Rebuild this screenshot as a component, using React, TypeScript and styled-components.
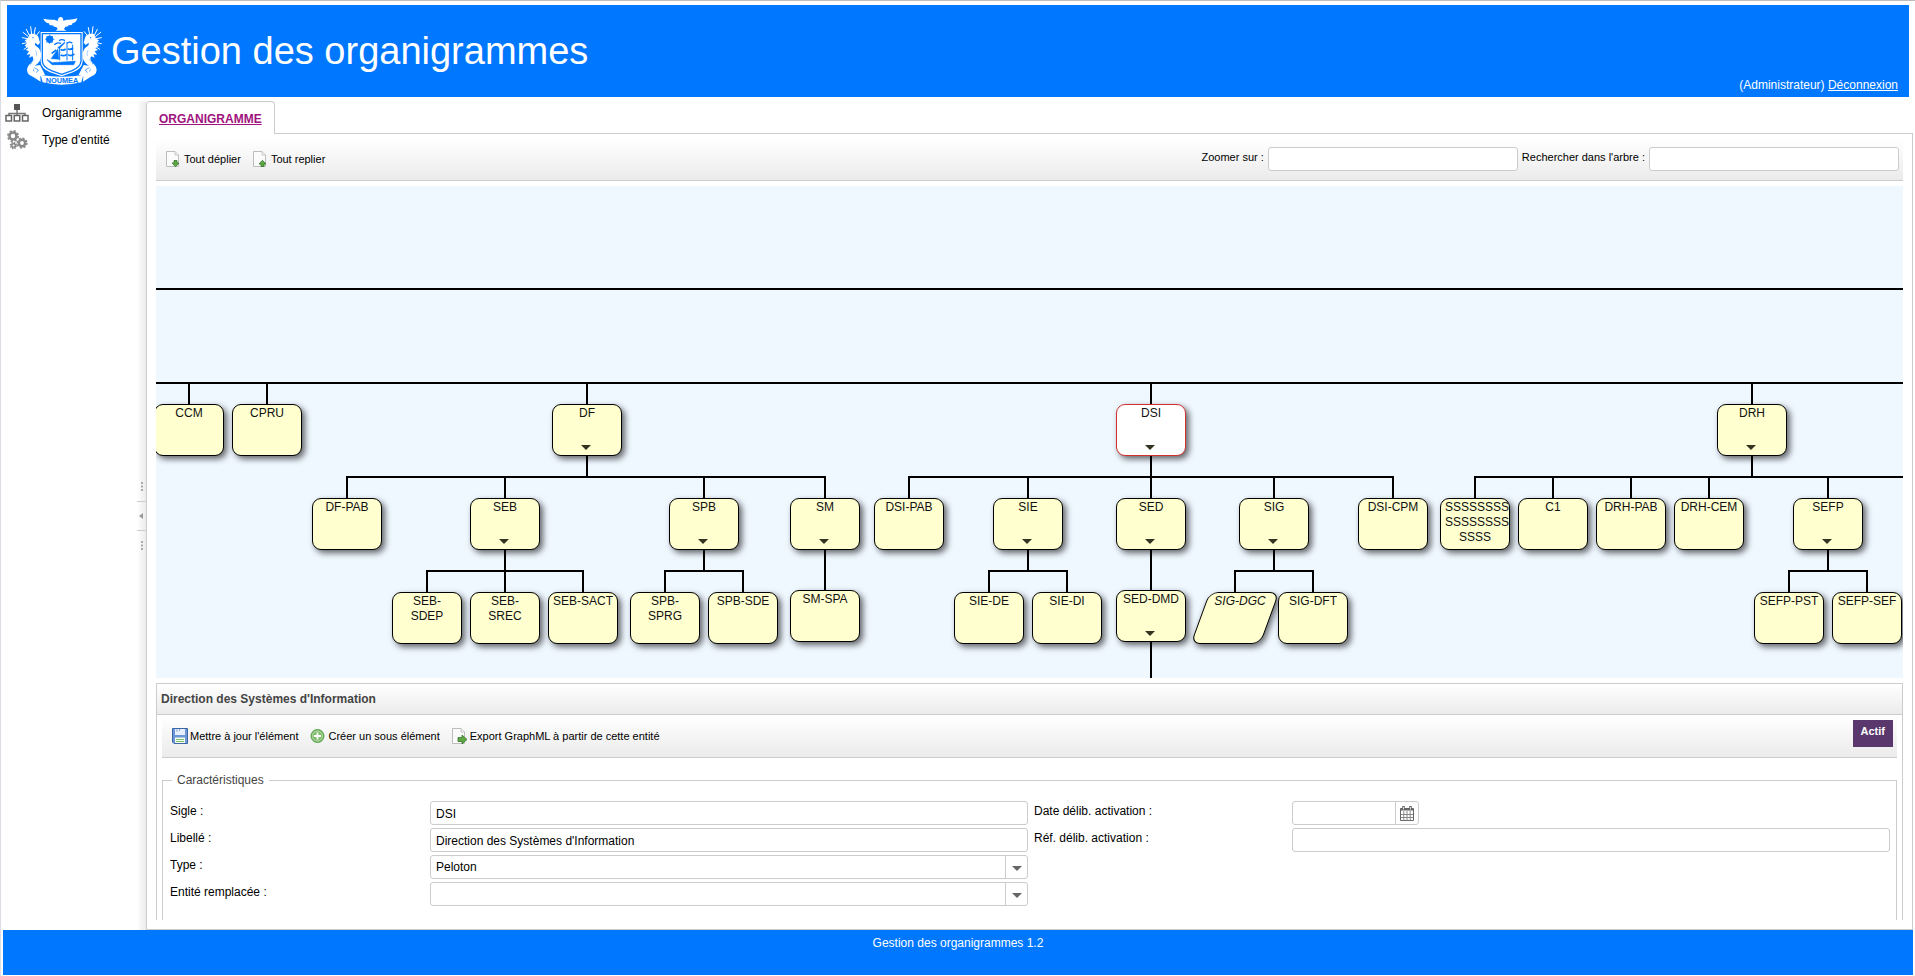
import React from 'react';
import styled, { createGlobalStyle, css } from 'styled-components';

const BLUE = '#0077ff';
const LINE = '#cccccc';

const GlobalStyle = createGlobalStyle`
  *, *::before, *::after { box-sizing: border-box; }
  body {
    margin: 0;
    background: #fff;
    color: #000;
    font: 12px/14px "Liberation Sans", Arial, sans-serif;
  }
  button, input, select { font: inherit; color: inherit; }
`;

const Page = styled.div`
  display: flex;
  flex-direction: column;
  height: 100vh;
  min-height: 760px;
  border-top: 1px solid #bdbdbd;
  border-left: 1px solid #dcdce4;
`;

/* Header */

const Header = styled.header`
  display: flex;
  flex: none;
  align-items: center;
  gap: 1px;
  height: 92px;
  margin: 4px 6px 4px;
  padding: 0 11px 0 8px;
  background: ${BLUE};
  color: #fff;
`;

const CrestImage = styled.svg`
  flex: none;
  margin-bottom: 2px;
`;

const Title = styled.h1`
  margin: 0;
  font-size: 38px;
  line-height: 44px;
  font-weight: 400;
`;

const Session = styled.div`
  align-self: flex-end;
  margin-left: auto;
  padding-bottom: 5px;

  a { color: inherit; }
`;

const Body = styled.div`
  display: flex;
  flex: 1;
  min-height: 0;
`;

/* Sidebar */

const Sidebar = styled.aside`
  display: flex;
  flex: none;
  width: 145px;
`;

const Nav = styled.nav`
  flex: 1;
`;

const NavLink = styled.a`
  display: flex;
  align-items: center;
  gap: 13px;
  height: 27px;
  padding: 0 0 3px 4px;
  color: #000;
  text-decoration: none;

  svg { flex: none; }
`;

const Splitter = styled.div`
  display: flex;
  flex: none;
  flex-direction: column;
  align-items: center;
  justify-content: center;
  gap: 10px;
  width: 9px;
  background: linear-gradient(to right, #fff, #ebebeb);
`;

const Collapse = styled.button`
  display: flex;
  align-items: center;
  justify-content: center;
  width: 9px;
  height: 30px;
  padding: 0;
  border: solid ${LINE};
  border-width: 1px 0;
  background: none;
`;

/* Main area */

const Main = styled.main`
  display: flex;
  flex: 1;
  flex-direction: column;
  min-width: 0;
  margin-right: 2px;
`;

const TabBar = styled.div`
  display: flex;
  flex: none;
  height: 33px;
`;

const Tab = styled.a`
  padding: 10px 12px 0;
  border: 1px solid ${LINE};
  border-bottom: 0;
  border-radius: 4px 4px 0 0;
  color: #a0127d;
  font-weight: 700;
`;

const TabFiller = styled.div`
  flex: 1;
  border-bottom: 1px solid ${LINE};
`;

const Panel = styled.section`
  display: flex;
  flex: 1;
  flex-direction: column;
  gap: 5px;
  min-height: 0;
  padding: 5px 9px 9px;
  border: 1px solid ${LINE};
  border-top: 0;
`;

const Toolbar = styled.div`
  display: flex;
  flex: none;
  align-items: flex-start;
  height: 42px;
  padding: 4px;
  border-bottom: 1px solid ${LINE};
  background: linear-gradient(#fff, #ebebeb);
  font-size: 11px;
`;

const ToolButton = styled.button`
  display: flex;
  align-items: center;
  gap: 2px;
  height: 26px;
  margin-top: 4px;
  padding: 0 6px 2px;
  border: 0;
  background: none;
  white-space: nowrap;
`;

const ToolFields = styled.div`
  display: flex;
  gap: 4px;
  margin: 4px 0 0 auto;
`;

const FieldLabel = styled.label`
  line-height: 20px;
  white-space: nowrap;
`;

const fieldBox = css`
  width: 100%;
  height: 24px;
  border: 1px solid ${LINE};
  border-radius: 3px;
  background: #fff;
`;

const TextInput = styled.input`
  ${fieldBox}
  padding: 1px 5px 0;
`;

const SearchInput = styled(TextInput)`
  width: 250px;
`;

/* Chart */

const Canvas = styled.div`
  position: relative;
  flex: 1;
  min-height: 0;
  overflow: hidden;
  background: #eff7ff;
`;

const Connectors = styled.svg`
  position: absolute;
  inset: 0;
  width: 100%;
  height: 100%;
`;

const Node = styled.button<{ $x: number; $y: number; $selected?: boolean; $slanted?: boolean }>`
  position: absolute;
  left: ${p => p.$x - 35}px;
  top: ${p => p.$y}px;
  isolation: isolate;
  display: flex;
  flex-direction: column;
  align-items: center;
  justify-content: space-between;
  width: 70px;
  height: 52px;
  padding: ${p => (p.$slanted ? '2px 4px 6px 14px' : '2px 5px 6px')};
  border: 0;
  background: none;
  color: #111;
  font-style: ${p => (p.$slanted ? 'italic' : 'normal')};
  line-height: 15px;
  white-space: pre;

  &::before {
    content: '';
    position: absolute;
    inset: 0;
    z-index: -1;
    border: 1px solid ${p => (p.$selected ? '#d0312f' : '#000')};
    border-radius: 9px;
    background: ${p => (p.$selected ? '#fff' : '#ffffd0')};
    box-shadow: 3px 3px 6px rgba(0, 0, 0, 0.6);
    ${p => p.$slanted && 'transform: skewX(-20deg);'}
  }

  span {
    width: 100%;
    text-align: center;
  }

  svg { margin-right: 2px; }
`;

/* Details */

const Details = styled.section`
  display: flex;
  flex: none;
  flex-direction: column;
  height: 237px;
  overflow: hidden;
  border: 1px solid ${LINE};
  border-bottom: 0;
`;

const DetailsTitle = styled.h2`
  flex: none;
  margin: 0 0 1px;
  padding: 0 4px;
  border-bottom: 1px solid ${LINE};
  background: linear-gradient(#fff, #ebebeb);
  color: #444;
  font-size: 12px;
  line-height: 30px;
`;

const DetailsBody = styled.div`
  flex: none;
  padding: 0 5px;
`;

const Badge = styled.span`
  height: 27px;
  margin-left: auto;
  padding: 5px 8px;
  background: #5a376c;
  color: #fff;
  font-weight: 700;
  line-height: 13px;
`;

const Group = styled.fieldset`
  margin: 15px 0 0;
  padding: 14px 0 60px 7px;
  border: 1px solid ${LINE};

  legend {
    margin-left: 2px;
    padding: 0 5px;
    color: #444;
  }
`;

const FormGrid = styled.div`
  display: grid;
  grid-template-columns: 260px 1fr 258px 1fr;
  row-gap: 3px;
`;

const FormLabel = styled(FieldLabel)<{ $first?: boolean }>`
  grid-column: ${p => (p.$first ? 1 : 'auto')};
`;

const Cell = styled.div`
  padding-right: 6px;
`;

const SelectBox = styled.div`
  position: relative;
`;

const Select = styled.select`
  ${fieldBox}
  padding: 0 28px 0 5px;
  appearance: none;
`;

const Trigger = styled.span`
  position: absolute;
  top: 0;
  right: 0;
  display: flex;
  align-items: center;
  justify-content: center;
  width: 23px;
  height: 24px;
  padding-top: 2px;
  border-left: 1px solid ${LINE};
  pointer-events: none;
`;

const DateBox = styled.div`
  ${fieldBox}
  display: flex;
  width: 127px;

  input {
    flex: 1;
    min-width: 0;
    padding: 0 5px;
    border: 0;
    background: none;
  }

  button {
    display: flex;
    align-items: center;
    justify-content: center;
    width: 23px;
    padding: 0;
    border: 0;
    border-left: 1px solid ${LINE};
    background: none;
  }
`;

const Footer = styled.footer`
  flex: none;
  height: 45px;
  margin: 0 2px 1px;
  padding-top: 6px;
  background: ${BLUE};
  color: #fff;
  text-align: center;
`;

/* Drawings */

const Crest = () => (
  <CrestImage width="95" height="80" viewBox="0 0 285 240" role="img" aria-label="Nouméa">
    <g fill="#fff">
      <path d="M85 26 Q104 30 118 29 L128 33 Q129 22 137 21 Q145 22 145 32 L156 29 Q172 30 187 25 Q184 38 172 40 Q174 46 160 46 Q161 51 151 50 L147 58 L155 62 H122 L128 57 L124 51 Q114 52 114 46 Q101 47 102 40 Q90 38 85 26Z" />
      <path d="M77 66 H203 V154 Q202 176 174 187 L140 199 L105 187 Q78 176 77 154Z" />
    </g>
    <path d="M82 71 H198 V153 Q197 171 171 182 L140 193 L109 182 Q83 171 82 153Z" fill="none" stroke={BLUE} strokeWidth="4" />
    <g stroke={BLUE} fill={BLUE} strokeWidth="3">
      <circle cx="104" cy="88" r="10" />
      <path d="M104 74v28M90 88h28M94 78l20 20M114 78l-20 20" strokeWidth="2" />
      <path d="M96 149 L112 158 L181 154 L176 164 H111Z" strokeWidth="2" />
      <path d="M108 146 L129 116 L132 148Z M128 113 L150 95 L149 100 L133 116Z" strokeWidth="1" />
      <path d="M118 104 Q126 96 138 100 M132 92 Q140 86 150 92 M156 100 Q164 93 172 100" fill="none" strokeWidth="4" />
      <path d="M137 118 Q144 124 152 117 M137 135 Q146 140 155 133 M158 116 Q166 121 174 114 M159 134 Q168 140 178 132 M110 130 L124 120" fill="none" strokeWidth="5" />
      <path d="M134 110V151M156 97V151M173 104V151" strokeWidth="3" />
    </g>
    {[0, 1].map(side => (
      <g key={side} transform={side ? 'translate(281 0) scale(-1 1)' : undefined}>
        <path
          d="M44 72 Q62 68 70 80 L75 98 L69 105 L60 98 Q58 105 64 109 Q80 119 78 139 Q77 156 62 166 Q53 172 54 179 Q56 187 63 185 Q68 181 61 177 Q72 173 76 182 Q75 199 58 200 Q38 199 36 181 Q36 168 49 158 Q59 147 52 139 L42 143 L46 133 L35 134 L42 124 L32 120 L40 114 L29 107 L36 99 L29 91 L38 86Z"
          fill="#fff"
        />
        <circle cx="54" cy="83" r="2" fill={BLUE} />
        <path d="M62 122q5 8 1 17M57 149q-9 9-10 17" fill="none" stroke={BLUE} strokeWidth="2" strokeDasharray="3 3" />
        <path d="M38 86 L22 83M39 79 L24 67M43 76 L34 58M50 74 L47 50M57 74 L61 53M64 77 L73 65M36 98 L22 101M37 111 L27 118" stroke="#fff" strokeWidth="3" strokeLinecap="round" />
        <path d="M50 169 L75 165 L83 181 L90 194 L76 199 L77 215 L49 197 L59 185Z" fill="#fff" />
        <path d="M58 173 L70 180 L64 188" fill="none" stroke={BLUE} strokeWidth="2" />
      </g>
    ))}
    <path d="M77 195 Q140 206 205 195 L199 217 Q140 231 83 217Z" fill="#fff" />
    <text x="141" y="219" textAnchor="middle" fontSize="22" fontWeight="700" fontFamily="Liberation Sans, Arial, sans-serif" fill={BLUE}>NOUMEA</text>
  </CrestImage>
);

const OrgIcon = () => (
  <svg width="24" height="18" viewBox="0 0 24 18">
    <path d="M12 6v6M4 12V9.500h16V12" fill="none" stroke="#777" strokeWidth="1.500" />
    <rect x="9" y="0" width="6" height="6" fill="#555" />
    <g fill="#fff" stroke="#666" strokeWidth="1.500">
      <rect x="1" y="11.500" width="5.500" height="5.500" />
      <rect x="9.250" y="11.500" width="5.500" height="5.500" />
      <rect x="17.500" y="11.500" width="5.500" height="5.500" />
    </g>
  </svg>
);

const GearsIcon = () => (
  <svg width="24" height="20" viewBox="0 0 24 20" fill="none" stroke="#8a8a8a">
    <circle cx="8" cy="6" r="3.500" strokeWidth="2.600" />
    <circle cx="8" cy="6" r="5.100" strokeWidth="1.800" strokeDasharray="2.100 1.905" />
    <circle cx="17" cy="13" r="3.200" strokeWidth="2.600" />
    <circle cx="17" cy="13" r="4.800" strokeWidth="1.700" strokeDasharray="1.900 1.870" />
    <circle cx="8.500" cy="15.500" r="1.900" strokeWidth="1.800" />
    <circle cx="8.500" cy="15.500" r="3.200" strokeWidth="1.300" strokeDasharray="1.300 1.210" />
  </svg>
);

const arrows = {
  down: 'M8 9.500h3v2.500h2L9.500 15.700 6 12h2z',
  up: 'M8 15.500h3V13h2L9.500 9.300 6 13h2z',
  right: 'M6 9.500h4V7l5 4.500-5 4.500v-2.500H6z',
};

const PageIcon = ({ arrow }: { arrow: keyof typeof arrows }) => (
  <svg width="16" height="16" viewBox="0 0 16 16">
    <path d="M.5.5h8.500l3.500 3.500v11.500h-12z" fill="#fbfbfb" stroke="#bdbdbd" />
    <path d="M9 .5V4H12.500" fill="#eee" stroke="#c8c8c8" />
    <path d={arrows[arrow]} fill="#5fa843" stroke="#33762a" strokeWidth=".8" />
  </svg>
);

const SaveIcon = () => (
  <svg width="16" height="16" viewBox="0 0 16 16">
    <path d="M.5.5h15v15H2l-1.500-1.500z" fill="#6b97d6" stroke="#3c66a6" />
    <rect x="3" y="1" width="10" height="6" fill="#e6effb" />
    <path d="M5 1v3M7.500 1v2" stroke="#8eabd6" />
    <rect x="3" y="9.500" width="10" height="5.500" fill="#f4fbef" />
    <path d="M4 11.500h8M4 13.500h8" stroke="#7fbf6b" />
  </svg>
);

const AddIcon = () => (
  <svg width="16" height="16" viewBox="0 0 16 16">
    <circle cx="7.500" cy="8" r="6.500" fill="#7dbb6b" stroke="#5a9e4b" />
    <circle cx="7.500" cy="8" r="5" fill="none" stroke="#b3dca6" />
    <path d="M7.500 4.500v7M4 8h7" stroke="#fff" strokeWidth="2" />
  </svg>
);

const CalendarIcon = () => (
  <svg width="14" height="15" viewBox="0 0 14 15">
    <path d="M.5 2.500h13v12H.5z" fill="#fff" stroke="#666" />
    <path d="M.5 2.500h13v2H.5z" fill="#666" />
    <path d="M1 8.500h12M1 11.500h12M3.800 5v9.500M7 5v9.500M10.200 5v9.500" stroke="#888" />
    <path d="M3.500 0v4M10.500 0v4" stroke="#666" strokeWidth="2.500" />
    <path d="M3.500 1v2.500M10.500 1v2.500" stroke="#ddd" />
  </svg>
);

const Caret = ({ color }: { color: string }) => (
  <svg width="10" height="5" viewBox="0 0 10 5">
    <path d="M0 0h10L5 5z" fill={color} />
  </svg>
);

const Grip = () => (
  <svg width="2" height="9" viewBox="0 0 2 9">
    <path d="M0 0h2v2H0zM0 3.500h2v2H0zM0 7h2v2H0z" fill="#aaa" />
  </svg>
);

/* Data */

const ROW_1 = 218;
const ROW_2 = 312;
const ROW_3 = 406;

type Unit = { name: string; x: number; y: number; open?: boolean; selected?: boolean; slanted?: boolean };

const units: Unit[] = [
  { name: 'CCM', x: 33, y: ROW_1 },
  { name: 'CPRU', x: 111, y: ROW_1 },
  { name: 'DF', x: 431, y: ROW_1, open: true },
  { name: 'DSI', x: 995, y: ROW_1, open: true, selected: true },
  { name: 'DRH', x: 1596, y: ROW_1, open: true },
  { name: 'DF-PAB', x: 191, y: ROW_2 },
  { name: 'SEB', x: 349, y: ROW_2, open: true },
  { name: 'SPB', x: 548, y: ROW_2, open: true },
  { name: 'SM', x: 669, y: ROW_2, open: true },
  { name: 'DSI-PAB', x: 753, y: ROW_2 },
  { name: 'SIE', x: 872, y: ROW_2, open: true },
  { name: 'SED', x: 995, y: ROW_2, open: true },
  { name: 'SIG', x: 1118, y: ROW_2, open: true },
  { name: 'DSI-CPM', x: 1237, y: ROW_2 },
  { name: 'SSSSSSSS\nSSSSSSSS\nSSSS', x: 1319, y: ROW_2 },
  { name: 'C1', x: 1397, y: ROW_2 },
  { name: 'DRH-PAB', x: 1475, y: ROW_2 },
  { name: 'DRH-CEM', x: 1553, y: ROW_2 },
  { name: 'SEFP', x: 1672, y: ROW_2, open: true },
  { name: 'SEB-\nSDEP', x: 271, y: ROW_3 },
  { name: 'SEB-\nSREC', x: 349, y: ROW_3 },
  { name: 'SEB-SACT', x: 427, y: ROW_3 },
  { name: 'SPB-\nSPRG', x: 509, y: ROW_3 },
  { name: 'SPB-SDE', x: 587, y: ROW_3 },
  { name: 'SM-SPA', x: 669, y: ROW_3 - 2 },
  { name: 'SIE-DE', x: 833, y: ROW_3 },
  { name: 'SIE-DI', x: 911, y: ROW_3 },
  { name: 'SED-DMD', x: 995, y: ROW_3 - 2, open: true },
  { name: 'SIG-DGC', x: 1079, y: ROW_3, slanted: true },
  { name: 'SIG-DFT', x: 1157, y: ROW_3 },
  { name: 'SEFP-PST', x: 1633, y: ROW_3 },
  { name: 'SEFP-SEF', x: 1711, y: ROW_3 },
];

/* Each branch: vertical stem of the parent, the bar under it, and a drop to every child. */
const branches = [
  { parent: 431, y: 291, children: [191, 349, 548, 669] },
  { parent: 995, y: 291, children: [753, 872, 995, 1118, 1237] },
  { parent: 1596, y: 291, children: [1319, 1397, 1475, 1553, 1672, 2200] },
  { parent: 349, y: 385, children: [271, 349, 427] },
  { parent: 548, y: 385, children: [509, 587] },
  { parent: 872, y: 385, children: [833, 911] },
  { parent: 1118, y: 385, children: [1079, 1157] },
  { parent: 1672, y: 385, children: [1633, 1711] },
];

const connectorPath = [
  'M0 103H4000M0 197H4000',
  ...[33, 111, 431, 995, 1596].map(x => `M${x} 197V218`),
  ...branches.map(
    b =>
      `M${b.parent} ${b.y - 21}V${b.y}M${b.children[0] - 1} ${b.y}H${b.children[b.children.length - 1] + 1}` +
      b.children.map(x => `M${x} ${b.y}V${b.y + 21}`).join('')
  ),
  'M669 364V404M995 364V404M995 456V2000',
].join('');

export default function App() {
  return (
    <>
      <GlobalStyle />
      <Page>
        <Header>
          <Crest />
          <Title>Gestion des organigrammes</Title>
          <Session>
            (Administrateur) <a href="#logout">Déconnexion</a>
          </Session>
        </Header>

        <Body>
          <Sidebar>
            <Nav>
              <NavLink href="#chart"><OrgIcon />Organigramme</NavLink>
              <NavLink href="#types"><GearsIcon />Type d'entité</NavLink>
            </Nav>
            <Splitter>
              <Grip />
              <Collapse aria-label="Replier le menu">
                <svg width="5" height="6" viewBox="0 0 5 6"><path d="M4 0v6L0 3z" fill="#999" /></svg>
              </Collapse>
              <Grip />
            </Splitter>
          </Sidebar>

          <Main>
            <TabBar>
              <Tab href="#chart">ORGANIGRAMME</Tab>
              <TabFiller />
            </TabBar>
            <Panel>
              <Toolbar>
                <ToolButton><PageIcon arrow="down" />Tout déplier</ToolButton>
                <ToolButton><PageIcon arrow="up" />Tout replier</ToolButton>
                <ToolFields>
                  <FieldLabel htmlFor="zoom">Zoomer sur :</FieldLabel>
                  <SearchInput id="zoom" />
                  <FieldLabel htmlFor="search">Rechercher dans l'arbre :</FieldLabel>
                  <SearchInput id="search" />
                </ToolFields>
              </Toolbar>

              <Canvas>
                <Connectors aria-hidden="true">
                  <path d={connectorPath} fill="none" stroke="#000" strokeWidth="2" />
                </Connectors>
                {units.map(u => (
                  <Node key={u.name} $x={u.x} $y={u.y} $selected={u.selected} $slanted={u.slanted}>
                    <span>{u.name}</span>
                    {u.open && <Caret color="#333322" />}
                  </Node>
                ))}
              </Canvas>

              <Details>
                <DetailsTitle>Direction des Systèmes d'Information</DetailsTitle>
                <DetailsBody>
                  <Toolbar>
                    <ToolButton><SaveIcon />Mettre à jour l'élément</ToolButton>
                    <ToolButton><AddIcon />Créer un sous élément</ToolButton>
                    <ToolButton><PageIcon arrow="right" />Export GraphML à partir de cette entité</ToolButton>
                    <Badge>Actif</Badge>
                  </Toolbar>
                  <Group>
                    <legend>Caractéristiques</legend>
                    <FormGrid>
                      <FormLabel $first htmlFor="sigle">Sigle :</FormLabel>
                      <Cell><TextInput id="sigle" defaultValue="DSI" /></Cell>
                      <FormLabel htmlFor="date">Date délib. activation :</FormLabel>
                      <Cell>
                        <DateBox>
                          <input id="date" />
                          <button aria-label="Choisir une date"><CalendarIcon /></button>
                        </DateBox>
                      </Cell>

                      <FormLabel $first htmlFor="label">Libellé :</FormLabel>
                      <Cell><TextInput id="label" defaultValue="Direction des Systèmes d'Information" /></Cell>
                      <FormLabel htmlFor="ref">Réf. délib. activation :</FormLabel>
                      <Cell><TextInput id="ref" /></Cell>

                      <FormLabel $first htmlFor="type">Type :</FormLabel>
                      <Cell>
                        <SelectBox>
                          <Select id="type"><option>Peloton</option></Select>
                          <Trigger><Caret color="#666" /></Trigger>
                        </SelectBox>
                      </Cell>

                      <FormLabel $first htmlFor="replaced">Entité remplacée :</FormLabel>
                      <Cell>
                        <SelectBox>
                          <Select id="replaced"><option></option></Select>
                          <Trigger><Caret color="#666" /></Trigger>
                        </SelectBox>
                      </Cell>
                    </FormGrid>
                  </Group>
                </DetailsBody>
              </Details>
            </Panel>
          </Main>
        </Body>

        <Footer>Gestion des organigrammes 1.2</Footer>
      </Page>
    </>
  );
}
